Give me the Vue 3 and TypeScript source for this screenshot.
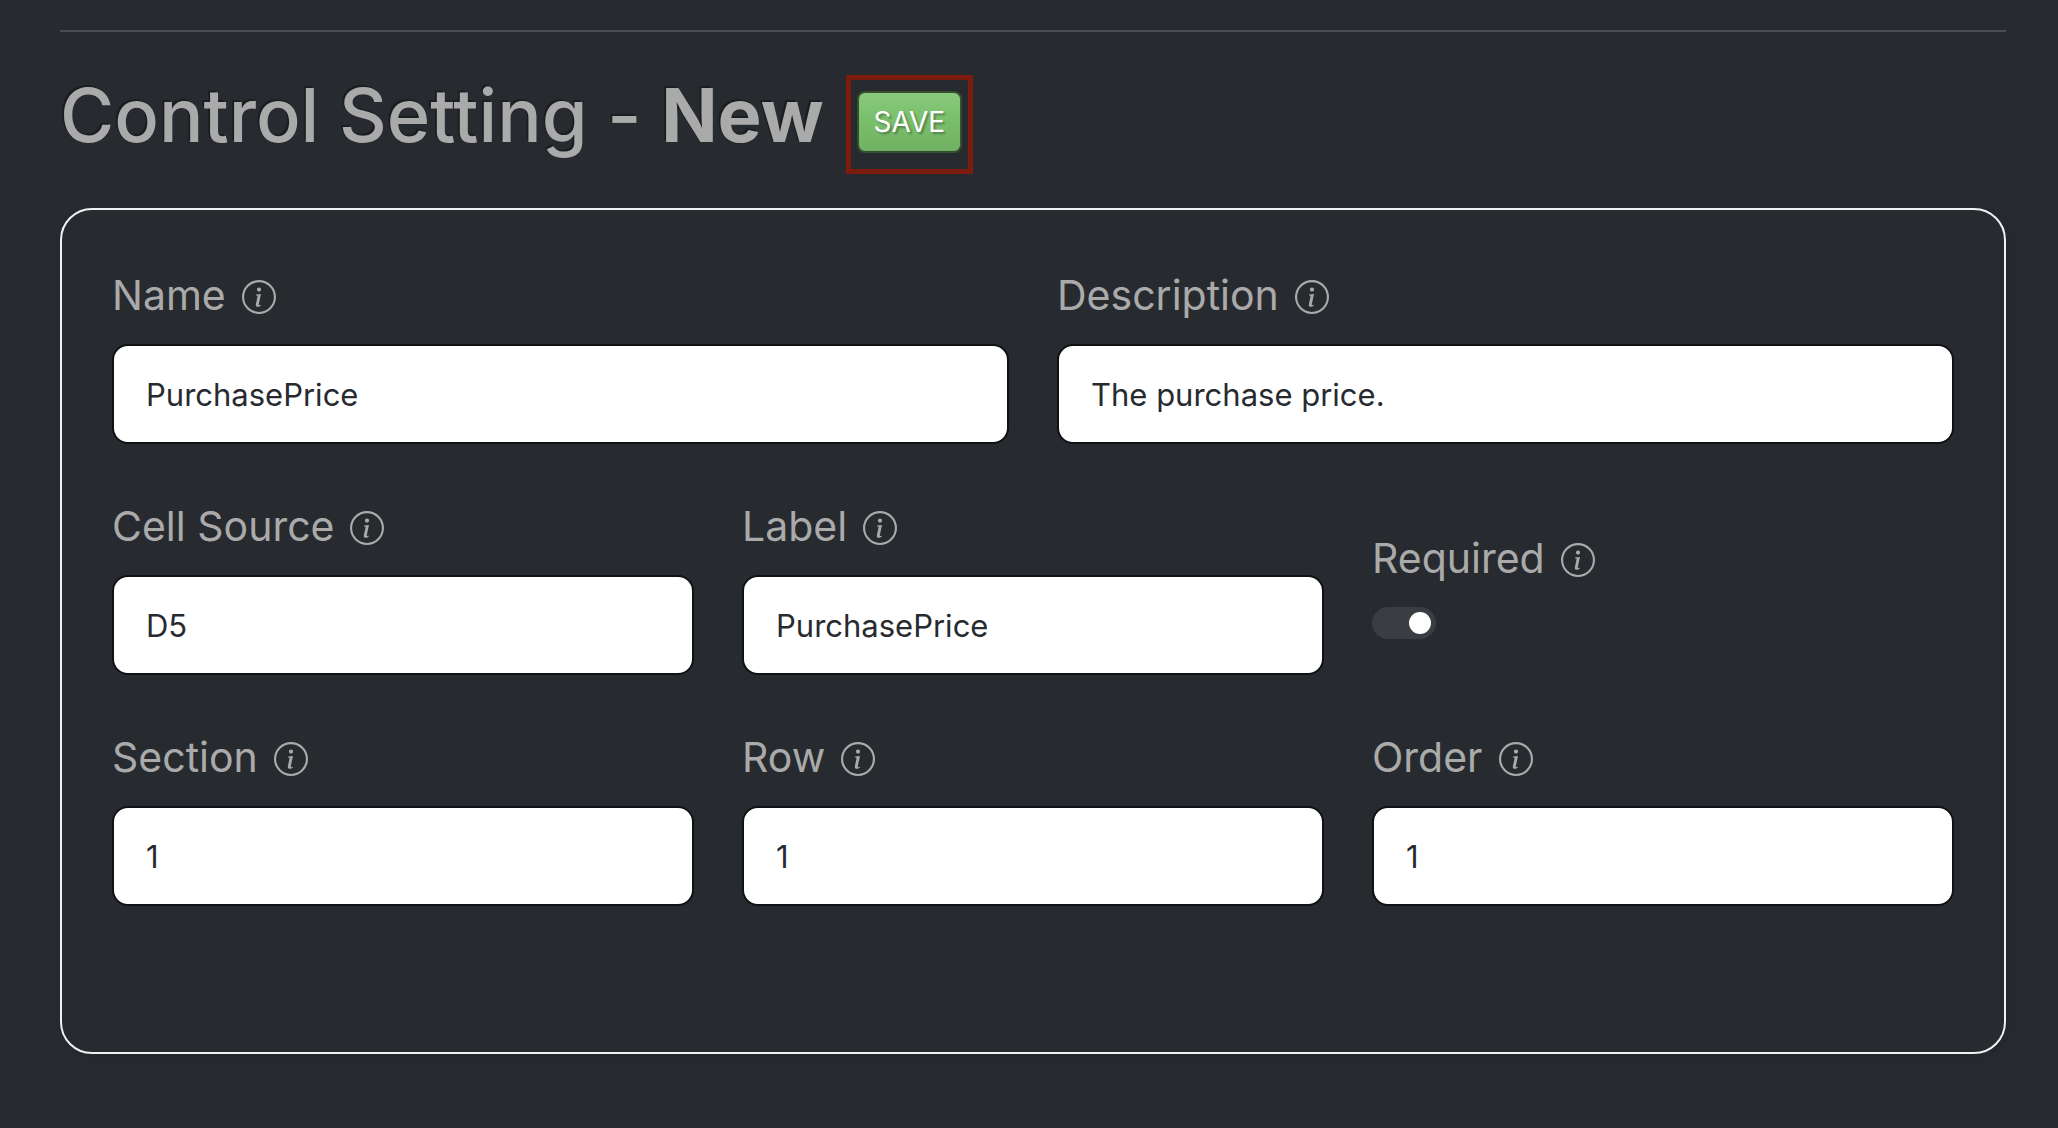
<script setup lang="ts">
import { reactive } from 'vue'

interface Field {
  id: string
  label: string
  value: string
}

const topFields = reactive<Field[]>([
  { id: 'name', label: 'Name', value: 'PurchasePrice' },
  { id: 'description', label: 'Description', value: 'The purchase price.' },
])

const sourceFields = reactive<Field[]>([
  { id: 'cell-source', label: 'Cell Source', value: 'D5' },
  { id: 'label', label: 'Label', value: 'PurchasePrice' },
])

const placementFields = reactive<Field[]>([
  { id: 'section', label: 'Section', value: '1' },
  { id: 'row', label: 'Row', value: '1' },
  { id: 'order', label: 'Order', value: '1' },
])

const rows = [
  { key: 'top', fields: topFields, toggle: false },
  { key: 'source', fields: sourceFields, toggle: true },
  { key: 'placement', fields: placementFields, toggle: false },
]

const state = reactive({ required: true })

const ring = 'M8 15A7 7 0 1 1 8 1a7 7 0 0 1 0 14zm0 1A8 8 0 1 0 8 0a8 8 0 0 0 0 16z'
const letter =
  'm8.93 6.588-2.29.287-.082.38.45.083c.294.07.352.176.288.469l-.738 3.468c-.194.897.105 1.319.808 1.319.545 0 1.178-.252 1.465-.598l.088-.416c-.2.176-.492.246-.686.246-.275 0-.375-.193-.304-.533L8.93 6.588zM9 4.5a1 1 0 1 1-2 0 1 1 0 0 1 2 0z'
</script>

<template>
  <main class="page">
    <hr class="rule" />
    <form @submit.prevent>
      <header class="heading">
        <h1>Control Setting - <strong>New</strong></h1>
        <div class="highlight">
          <button type="submit" class="save">SAVE</button>
        </div>
      </header>

      <section class="panel">
        <div v-for="row in rows" :key="row.key" class="row">
          <div v-for="field in row.fields" :key="field.id" class="field">
            <label :for="field.id">
              {{ field.label }}
              <svg class="info" viewBox="0 0 16 16" aria-hidden="true">
                <path :d="ring" />
                <path :d="letter" />
              </svg>
            </label>
            <input :id="field.id" v-model="field.value" type="text" class="text" />
          </div>
          <div v-if="row.toggle" class="field centred">
            <label for="required">
              Required
              <svg class="info" viewBox="0 0 16 16" aria-hidden="true">
                <path :d="ring" />
                <path :d="letter" />
              </svg>
            </label>
            <input id="required" v-model="state.required" type="checkbox" role="switch" class="switch" />
          </div>
        </div>
      </section>
    </form>
  </main>
</template>

<style>
body {
  margin: 0;
  background: #272b30;
}
</style>

<style scoped>
.page {
  box-sizing: border-box;
  min-height: 100vh;
  padding: 30px 52px 74px 60px;
  color: #aaa;
  font-family: Inter, 'Liberation Sans', sans-serif;
}

.rule {
  height: 2px;
  margin: 0;
  border: 0;
  background: #494c50;
}

.heading {
  display: flex;
  align-items: flex-start;
  gap: 22px;
  padding: 43px 0 34px;
}

h1 {
  margin: 0;
  font-size: 74px;
  font-weight: 500;
  line-height: 80px;
  text-shadow: -2px -2px 0 rgba(0, 0, 0, 0.3);
}

h1 strong {
  font-weight: 700;
}

.highlight {
  box-sizing: border-box;
  height: 99px;
  padding: 11px 6px 16px;
  border: 5px solid #7b1c0e;
}

.save {
  box-sizing: border-box;
  display: block;
  height: 62px;
  padding: 0 15px;
  border: 2px solid #36502f;
  border-radius: 8px;
  background: linear-gradient(#8ac97f, #7bc16d 40%, #70b163);
  color: #fff;
  font-family: inherit;
  font-size: 28px;
  line-height: 36px;
  text-shadow: 2px 2px 2px rgba(0, 0, 0, 0.3);
}

.panel {
  display: flex;
  flex-direction: column;
  gap: 51px;
  padding: 54px 50px 146px;
  border: 2px solid #eef2f2;
  border-radius: 32px;
  box-shadow: 2px 2px 8px rgba(0, 0, 0, 0.1);
}

.row {
  display: flex;
  gap: 48px;
}

.field {
  display: flex;
  flex: 1 1 0;
  flex-direction: column;
  min-width: 0;
}

.centred {
  justify-content: center;
  padding-bottom: 4px;
}

label {
  display: flex;
  align-items: center;
  gap: 16px;
  height: 62px;
  margin-bottom: 18px;
  font-size: 41px;
  line-height: 62px;
}

.info {
  flex: none;
  width: 34px;
  height: 34px;
  margin-top: 4px;
  fill: currentColor;
}

.text {
  box-sizing: border-box;
  width: 100%;
  height: 100px;
  margin: 0;
  padding: 0 32px;
  border: 2px solid #101114;
  border-radius: 16px;
  outline: 0;
  background: #fff;
  color: #272b30;
  font-family: inherit;
  font-size: 31px;
}

.switch {
  box-sizing: border-box;
  display: flex;
  align-items: center;
  width: 64px;
  height: 32px;
  margin: 0;
  padding: 0 5px;
  border-radius: 16px;
  appearance: none;
  background: #3a3e43;
}

.switch::before {
  width: 22px;
  height: 22px;
  border-radius: 50%;
  background: #fff;
  content: '';
}

.switch:checked {
  justify-content: flex-end;
}
</style>
